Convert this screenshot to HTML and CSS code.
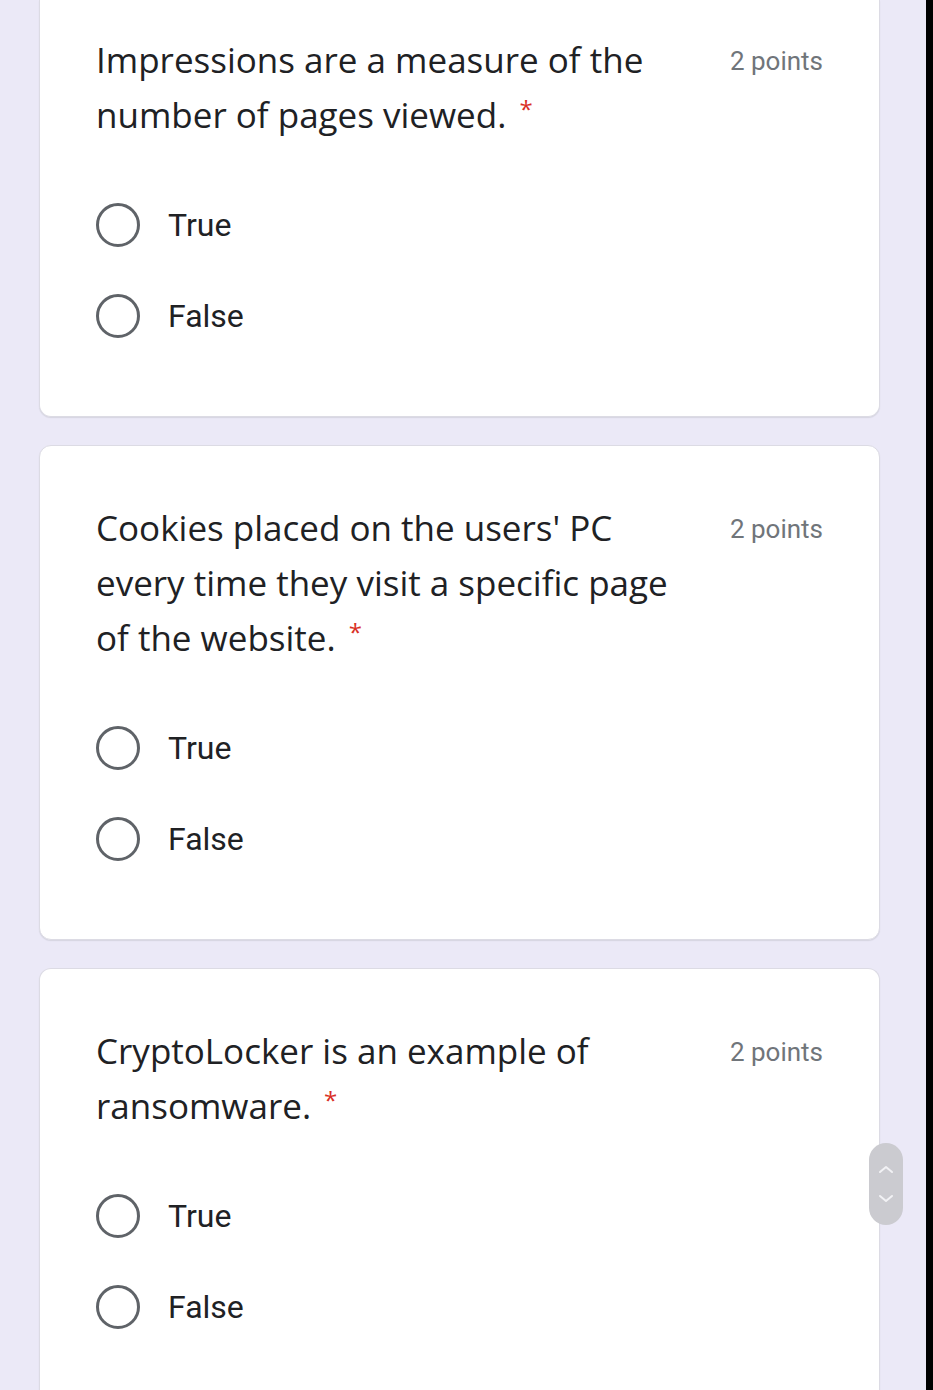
FILE: index.html
```html
<!DOCTYPE html>
<html lang="en">
<head>
<meta charset="utf-8">
<title>Quiz</title>
<link rel="stylesheet" href="styles.css">
</head>
<body>
<div class="screen">
  <main class="content">
    <section class="card card-first">
      <div class="head">
        <h2 class="title">Impressions are a measure of the number of pages viewed.<span class="req">*</span></h2>
        <div class="points">2 points</div>
      </div>
      <div class="options">
        <label class="option"><span class="radio"></span><span class="opt-text">True</span></label>
        <label class="option"><span class="radio"></span><span class="opt-text">False</span></label>
      </div>
    </section>
    <section class="card">
      <div class="head">
        <h2 class="title">Cookies placed on the users' PC every time they visit a specific page of the website.<span class="req">*</span></h2>
        <div class="points">2 points</div>
      </div>
      <div class="options">
        <label class="option"><span class="radio"></span><span class="opt-text">True</span></label>
        <label class="option"><span class="radio"></span><span class="opt-text">False</span></label>
      </div>
    </section>
    <section class="card card-last">
      <div class="head">
        <h2 class="title">CryptoLocker is an example of ransomware.<span class="req">*</span></h2>
        <div class="points">2 points</div>
      </div>
      <div class="options">
        <label class="option"><span class="radio"></span><span class="opt-text">True</span></label>
        <label class="option"><span class="radio"></span><span class="opt-text">False</span></label>
      </div>
    </section>
    <div class="scroll-thumb">
      <svg width="16" height="44" viewBox="0 0 16 44" aria-hidden="true">
        <path d="M2 10 L8 5 L14 10" fill="none" stroke="#f2f2f5" stroke-width="2" stroke-linecap="round" stroke-linejoin="round"/>
        <path d="M2 34 L8 39 L14 34" fill="none" stroke="#f2f2f5" stroke-width="2" stroke-linecap="round" stroke-linejoin="round"/>
      </svg>
    </div>
  </main>
  <div class="edge"></div>
</div>
</body>
</html>
```
FILE: styles.css
```css
html, body {
  margin: 0;
  padding: 0;
}
body {
  background: #ebe9f7;
  width: 933px;
  height: 1390px;
  overflow: hidden;
}
.screen {
  display: flex;
  height: 1390px;
}
.content {
  position: relative;
  flex: 1;
  padding-left: 39px;
  padding-right: 46px;
  display: flex;
  flex-direction: column;
  gap: 28px;
}
.edge {
  width: 7px;
  background: #000;
}
.card {
  background: #fff;
  border: 1px solid #dcdbe4;
  border-radius: 12px;
  box-shadow: 0 1px 1px rgba(60, 64, 67, 0.12);
  padding: 54px 56px 55px 56px;
  flex-shrink: 0;
}
.card-first {
  border-top: none;
  border-top-left-radius: 0;
  border-top-right-radius: 0;
  padding-top: 32px;
  padding-bottom: 55px;
}
.card-last {
  flex: 1;
  border-bottom: none;
  border-bottom-left-radius: 0;
  border-bottom-right-radius: 0;
}
.head {
  display: flex;
  align-items: flex-start;
}
.title {
  margin: 0;
  width: 610px;
  font-family: "Open Sans", sans-serif;
  font-weight: 400;
  font-size: 35px;
  line-height: 55px;
  color: #202124;
}
.req {
  display: inline-block;
  margin-left: 13px;
  color: #d93025;
  font-size: 24px;
  line-height: 24px;
  vertical-align: 10px;
}
.points {
  margin-left: auto;
  font-family: Roboto, sans-serif;
  font-size: 26px;
  line-height: 58px;
  color: #70757a;
}
.options {
  margin-top: 37px;
  display: flex;
  flex-direction: column;
}
.option {
  display: flex;
  align-items: center;
  height: 91px;
}
.radio {
  width: 38px;
  height: 38px;
  border: 3.5px solid #5f6368;
  border-radius: 50%;
  flex-shrink: 0;
}
.opt-text {
  margin-left: 28px;
  font-family: Roboto, sans-serif;
  font-size: 32px;
  color: #202124;
}
.scroll-thumb {
  position: absolute;
  left: 869px;
  top: 1143px;
  width: 34px;
  height: 82px;
  border-radius: 17px;
  background: #cbcbd0;
  display: flex;
  align-items: center;
  justify-content: center;
}
```
